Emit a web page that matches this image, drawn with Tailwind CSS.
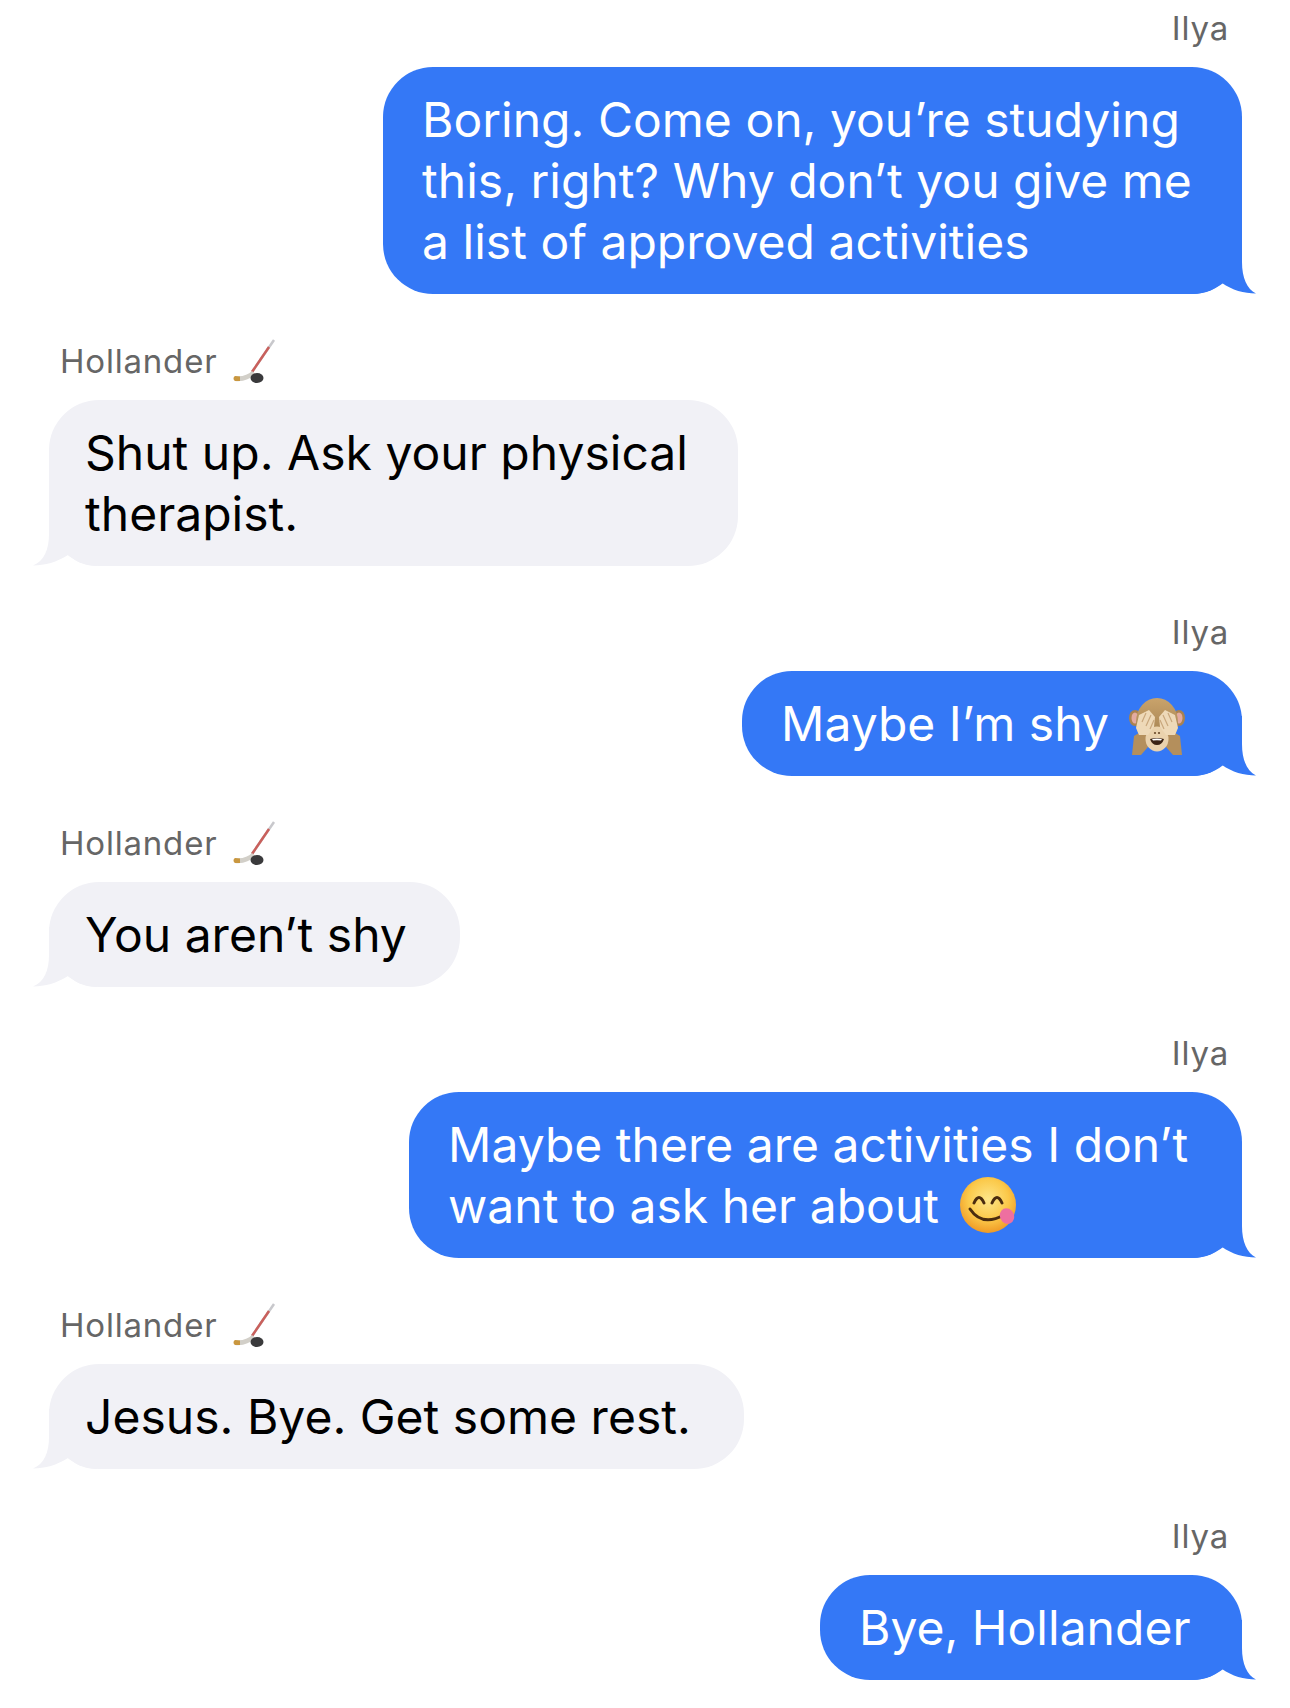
<!DOCTYPE html>
<html lang="en">
<head>
    <meta charset="UTF-8">
    <title>Messages</title>
    <script src="https://cdn.jsdelivr.net/npm/@tailwindcss/browser@4"></script>
</head>
<body class="bg-white font-['Inter','Liberation_Sans',sans-serif]">
<main class="w-[1290px] h-[1708px] overflow-hidden pt-[10px] flex flex-col gap-[48.6px] text-[48px] leading-[61px] tracking-[0.02px]">

    <section class="flex flex-col items-end pr-[48px]">
        <p class="h-[36px] mb-[21px] pr-[13px] text-[33px] leading-[36px] tracking-[0.8px] text-[#666]">Ilya</p>
        <div class="relative w-[859px] py-[22px] pl-[39px] rounded-[50px] bg-[#3478f6] text-white">
            <svg class="absolute right-[-14px] bottom-0" width="70" height="60" viewBox="0 -20 70 60"><path fill="#3478f6" d="M56 -20L56 8C56 24 61 35 70 39.5C58 39.5 46 36 36 29C30 34 20 40 6 40L6 -20Z"/></svg>
            <span class="relative">Boring. Come on, you’re studying<br>this, right? Why don’t you give me<br>a list of approved activities</span>
        </div>
    </section>

    <section class="flex flex-col items-start pl-[49px]">
        <p class="flex items-center h-[36px] mb-[21px] pl-[11px] text-[33px] leading-[36px] tracking-[0.8px] text-[#666]">Hollander
            <svg class="ml-[15px]" width="44" height="44" viewBox="0 0 44 44"><path d="M42 1L20 33" stroke="#c8c8cc" stroke-width="2.5"/><path d="M37 8L20 33" stroke="#c9605c" stroke-width="2.5"/><path d="M20 32C16 36 10 38 3 37L3 42C11 43 18 40 23 35Z" fill="#d2cfc8"/><path d="M8 37.5L3 37C1 38 1 41 3 42L8 42Z" fill="#c9973f"/><ellipse cx="25" cy="39" rx="6.5" ry="5" fill="#3a3a3c"/></svg>
        </p>
        <div class="relative w-[689px] py-[22px] pl-[36px] rounded-[50px] bg-[#f1f1f6] text-black">
            <svg class="absolute left-[-16px] bottom-0" width="70" height="60" viewBox="0 -20 70 60"><path fill="#f1f1f6" d="M16 -20L16 8C16 24 11 35 0 39.5C12 39.5 24 36 35 29C41 34 50 40 64 40L64 -20Z"/></svg>
            <span class="relative">Shut up. Ask your physical<br>therapist.</span>
        </div>
    </section>

    <section class="flex flex-col items-end pr-[48px]">
        <p class="h-[36px] mb-[21px] pr-[13px] text-[33px] leading-[36px] tracking-[0.8px] text-[#666]">Ilya</p>
        <div class="relative w-[500px] py-[22px] pl-[39px] rounded-[50px] bg-[#3478f6] text-white">
            <svg class="absolute right-[-14px] bottom-0" width="70" height="60" viewBox="0 -20 70 60"><path fill="#3478f6" d="M56 -20L56 8C56 24 61 35 70 39.5C58 39.5 46 36 36 29C30 34 20 40 6 40L6 -20Z"/></svg>
            <span class="relative">Maybe I’m shy</span>
            <svg class="absolute left-[387px] top-[27px]" width="56" height="57" viewBox="0 0 56 57">
                <defs><linearGradient id="fur" x1="0" y1="0" x2="0" y2="1"><stop offset="0" stop-color="#c9a36b"/><stop offset="1" stop-color="#9c7a4c"/></linearGradient></defs>
                <ellipse cx="6" cy="20" rx="6" ry="8" fill="#a9824f"/><ellipse cx="50" cy="20" rx="6" ry="8" fill="#a9824f"/><ellipse cx="6" cy="20" rx="3.5" ry="5.5" fill="#e3aaa0"/><ellipse cx="50" cy="20" rx="3.5" ry="5.5" fill="#e3aaa0"/>
                <ellipse cx="28" cy="24" rx="21" ry="24" fill="url(#fur)"/>
                <path d="M3 57L5 38L13 33L20 38L19 49L12 57Z" fill="#b48f5c"/><path d="M53 57L51 38L43 33L36 38L37 49L44 57Z" fill="#b48f5c"/>
                <ellipse cx="28" cy="41" rx="11.5" ry="12.5" fill="#ead2ad"/>
                <path d="M7 30L10 17L20 12L26 19L25 29L19 37L10 37Z" fill="#eed9b8"/><path d="M49 30L46 17L36 12L30 19L31 29L37 37L46 37Z" fill="#eed9b8"/>
                <path d="M13 24L17 15M17 28L22 17M21 31L25 22M43 24L39 15M39 28L34 17M35 31L31 22" stroke="#c9a77c" stroke-width="1.2" fill="none"/>
                <circle cx="26" cy="35" r="1.1" fill="#6b4a2a"/><circle cx="30" cy="35" r="1.1" fill="#6b4a2a"/>
                <path d="M21 41Q28 39 35 41Q33 47 28 47Q23 47 21 41Z" fill="#3b2314"/><path d="M23 41Q28 40 33 41L32 42.5Q28 42 24 42.5Z" fill="#fff"/>
            </svg>
        </div>
    </section>

    <section class="flex flex-col items-start pl-[49px]">
        <p class="flex items-center h-[36px] mb-[21px] pl-[11px] text-[33px] leading-[36px] tracking-[0.8px] text-[#666]">Hollander
            <svg class="ml-[15px]" width="44" height="44" viewBox="0 0 44 44"><path d="M42 1L20 33" stroke="#c8c8cc" stroke-width="2.5"/><path d="M37 8L20 33" stroke="#c9605c" stroke-width="2.5"/><path d="M20 32C16 36 10 38 3 37L3 42C11 43 18 40 23 35Z" fill="#d2cfc8"/><path d="M8 37.5L3 37C1 38 1 41 3 42L8 42Z" fill="#c9973f"/><ellipse cx="25" cy="39" rx="6.5" ry="5" fill="#3a3a3c"/></svg>
        </p>
        <div class="relative w-[411px] py-[22px] pl-[36px] rounded-[50px] bg-[#f1f1f6] text-black">
            <svg class="absolute left-[-16px] bottom-0" width="70" height="60" viewBox="0 -20 70 60"><path fill="#f1f1f6" d="M16 -20L16 8C16 24 11 35 0 39.5C12 39.5 24 36 35 29C41 34 50 40 64 40L64 -20Z"/></svg>
            <span class="relative">You aren’t shy</span>
        </div>
    </section>

    <section class="flex flex-col items-end pr-[48px]">
        <p class="h-[36px] mb-[21px] pr-[13px] text-[33px] leading-[36px] tracking-[0.8px] text-[#666]">Ilya</p>
        <div class="relative w-[833px] py-[22px] pl-[39px] rounded-[50px] bg-[#3478f6] text-white">
            <svg class="absolute right-[-14px] bottom-0" width="70" height="60" viewBox="0 -20 70 60"><path fill="#3478f6" d="M56 -20L56 8C56 24 61 35 70 39.5C58 39.5 46 36 36 29C30 34 20 40 6 40L6 -20Z"/></svg>
            <span class="relative">Maybe there are activities I don’t<br>want to ask her about</span>
            <svg class="absolute left-[551px] top-[85px]" width="56" height="56" viewBox="0 0 56 56">
                <defs><radialGradient id="face" cx="50%" cy="40%" r="60%"><stop offset="0" stop-color="#fde68a"/><stop offset="0.6" stop-color="#fbc94a"/><stop offset="1" stop-color="#f09a25"/></radialGradient></defs>
                <circle cx="28" cy="28" r="28" fill="url(#face)"/>
                <path d="M14 26Q19 15 24 26M32 26Q37 15 42 26" stroke="#4a2c0f" stroke-width="3" fill="none" stroke-linecap="round"/>
                <path d="M10 32Q22 50 44 38" stroke="#4a2c0f" stroke-width="3" fill="none" stroke-linecap="round"/>
                <ellipse cx="47" cy="39" rx="7" ry="8" transform="rotate(-25 47 39)" fill="#ee6fa0"/>
            </svg>
        </div>
    </section>

    <section class="flex flex-col items-start pl-[49px]">
        <p class="flex items-center h-[36px] mb-[21px] pl-[11px] text-[33px] leading-[36px] tracking-[0.8px] text-[#666]">Hollander
            <svg class="ml-[15px]" width="44" height="44" viewBox="0 0 44 44"><path d="M42 1L20 33" stroke="#c8c8cc" stroke-width="2.5"/><path d="M37 8L20 33" stroke="#c9605c" stroke-width="2.5"/><path d="M20 32C16 36 10 38 3 37L3 42C11 43 18 40 23 35Z" fill="#d2cfc8"/><path d="M8 37.5L3 37C1 38 1 41 3 42L8 42Z" fill="#c9973f"/><ellipse cx="25" cy="39" rx="6.5" ry="5" fill="#3a3a3c"/></svg>
        </p>
        <div class="relative w-[695px] py-[22px] pl-[36px] rounded-[50px] bg-[#f1f1f6] text-black">
            <svg class="absolute left-[-16px] bottom-0" width="70" height="60" viewBox="0 -20 70 60"><path fill="#f1f1f6" d="M16 -20L16 8C16 24 11 35 0 39.5C12 39.5 24 36 35 29C41 34 50 40 64 40L64 -20Z"/></svg>
            <span class="relative">Jesus. Bye. Get some rest.</span>
        </div>
    </section>

    <section class="flex flex-col items-end pr-[48px]">
        <p class="h-[36px] mb-[21px] pr-[13px] text-[33px] leading-[36px] tracking-[0.8px] text-[#666]">Ilya</p>
        <div class="relative w-[422px] py-[22px] pl-[39px] rounded-[50px] bg-[#3478f6] text-white">
            <svg class="absolute right-[-14px] bottom-0" width="70" height="60" viewBox="0 -20 70 60"><path fill="#3478f6" d="M56 -20L56 8C56 24 61 35 70 39.5C58 39.5 46 36 36 29C30 34 20 40 6 40L6 -20Z"/></svg>
            <span class="relative">Bye, Hollander</span>
        </div>
    </section>

</main>
</body>
</html>
